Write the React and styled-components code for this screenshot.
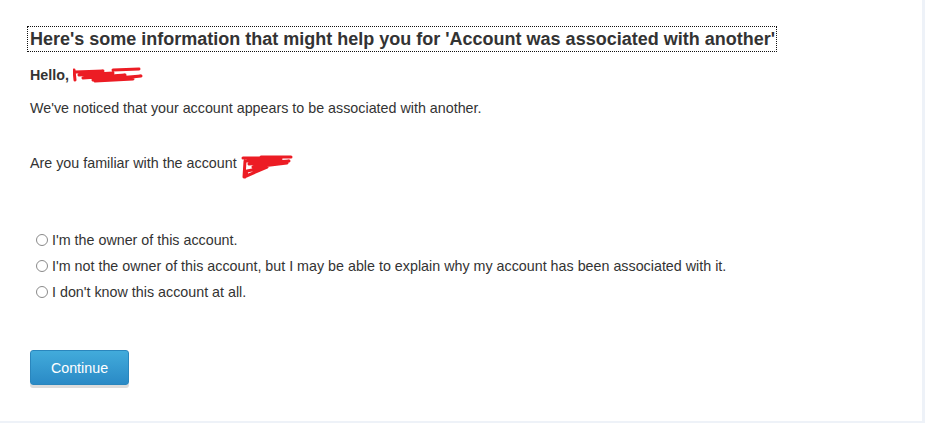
import React from "react";
import styled, { createGlobalStyle } from "styled-components";

const Global = createGlobalStyle`
  html, body { margin: 0; padding: 0; background: #eef2f8; }
  body { font-family: "Liberation Sans", Arial, sans-serif; color: #333; }
`;

const Panel = styled.div`
  width: 922px;
  height: 421px;
  background: #fff;
  box-sizing: border-box;
  padding: 27px 0 0 30px;
`;

const Heading = styled.h2`
  display: inline-block;
  margin: 0 0 0 -2px;
  padding: 0 1px 0 2px;
  font-size: 18px;
  line-height: 24px;
  font-weight: bold;
  color: #333;
  outline: 1px dotted #111;
`;

const Line = styled.p`
  margin: ${(p) => p.$top}px 0 0;
  font-size: 14.3px;
  line-height: 20px;
  height: 20px;
  font-weight: ${(p) => (p.$bold ? "bold" : "normal")};
  display: flex;
  align-items: flex-start;
`;

const Redact = styled.svg`
  display: block;
  flex: none;
  margin-top: ${(p) => p.$dy}px;
`;

const Options = styled.div`
  margin-top: 57px;
  display: flex;
  flex-direction: column;
  gap: 6px;
`;

const Option = styled.label`
  display: flex;
  align-items: center;
  gap: 4px;
  font-size: 14.3px;
  line-height: 20px;
  padding-left: 6px;
`;

const Radio = styled.span`
  width: 10px;
  height: 10px;
  border: 1px solid #8a8a8a;
  border-radius: 50%;
  background: #fff;
  flex: none;
`;

const Button = styled.button`
  margin-top: 48px;
  width: 99px;
  height: 35px;
  border: 1px solid #2a86bd;
  border-radius: 3px;
  background: linear-gradient(#42abdb, #2a8ac6);
  color: #fff;
  font-family: "Liberation Sans", Arial, sans-serif;
  font-size: 14.3px;
  box-shadow: 0 3px 0 #dcdcdc;
  cursor: pointer;
  padding: 0;
`;

export default function App() {
  return (
    <>
      <Global />
      <Panel>
        <Heading>
          Here's some information that might help you for 'Account was associated with another'
        </Heading>
        <Line $bold $top={14}>
          Hello,&nbsp;
          <Redact $dy={2} width="70" height="16" viewBox="0 0 70 16">
            <path d="M1 3 L2 13 M2 5 L30 4 L6 8 L40 6 L10 11 L52 8 L20 13 L68 9 L22 14 L60 12 M40 3 L66 2" stroke="#ec1c24" strokeWidth="3" fill="none" strokeLinecap="round" strokeLinejoin="round" />
          </Redact>
        </Line>
        <Line $top={13}>We've noticed that your account appears to be associated with another.</Line>
        <Line $top={35}>
          Are you familiar with the account&nbsp;
          <Redact $dy={2} width="52" height="26" viewBox="0 0 52 26">
            <path d="M2 3 L22 3 L6 6 L40 4 L8 9 L48 6 L12 12 L46 8 M4 6 L3 22 L26 12 L6 16 L4 22 M20 2 L50 2" stroke="#ec1c24" strokeWidth="3" fill="none" strokeLinecap="round" strokeLinejoin="round" />
          </Redact>
        </Line>
        <Options>
          <Option><Radio />I'm the owner of this account.</Option>
          <Option><Radio />I'm not the owner of this account, but I may be able to explain why my account has been associated with it.</Option>
          <Option><Radio />I don't know this account at all.</Option>
        </Options>
        <Button>Continue</Button>
      </Panel>
    </>
  );
}
